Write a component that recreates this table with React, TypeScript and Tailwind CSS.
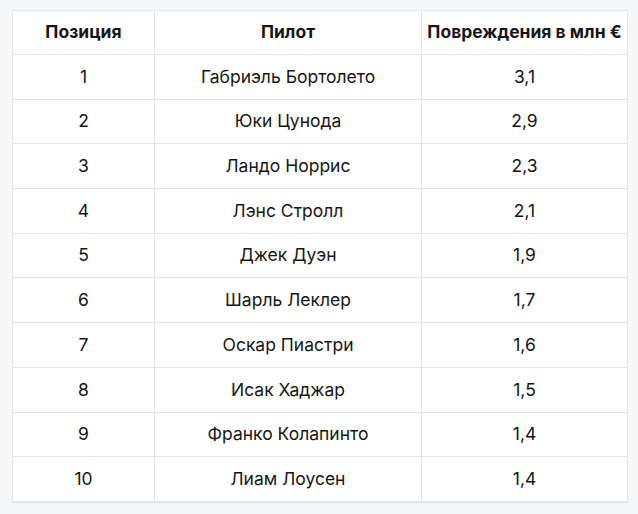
const rows: [number, string, string][] = [
  [1, "Габриэль Бортолето", "3,1"],
  [2, "Юки Цунода", "2,9"],
  [3, "Ландо Норрис", "2,3"],
  [4, "Лэнс Стролл", "2,1"],
  [5, "Джек Дуэн", "1,9"],
  [6, "Шарль Леклер", "1,7"],
  [7, "Оскар Пиастри", "1,6"],
  [8, "Исак Хаджар", "1,5"],
  [9, "Франко Колапинто", "1,4"],
  [10, "Лиам Лоусен", "1,4"],
]

export default function App() {
  return (
    <div className="w-[638px] h-[514px] bg-[#f6f7f9] pt-[10px] pl-[12px] font-['Inter',sans-serif] text-[#161616]">
      <table className="w-[616px] border-collapse bg-white border border-[#dcdcdc] shadow-[0_1px_1px_rgba(0,0,0,0.08)] text-center text-[17.5px]">
        <thead>
          <tr className="h-[44px]">
            <th className="w-[142px] border border-[#e6e6e6] font-bold text-[17.5px]">Позиция</th>
            <th className="w-[267px] border border-[#e6e6e6] font-bold text-[17.5px]">Пилот</th>
            <th className="border border-[#e6e6e6] font-bold text-[17.5px] px-0 whitespace-nowrap">Повреждения в млн €</th>
          </tr>
        </thead>
        <tbody>
          {rows.map(([pos, name, dmg]) => (
            <tr key={pos} className="h-[44.7px]">
              <td className="border border-[#e6e6e6]">{pos}</td>
              <td className="border border-[#e6e6e6]">{name}</td>
              <td className="border border-[#e6e6e6]">{dmg}</td>
            </tr>
          ))}
        </tbody>
      </table>
    </div>
  )
}
